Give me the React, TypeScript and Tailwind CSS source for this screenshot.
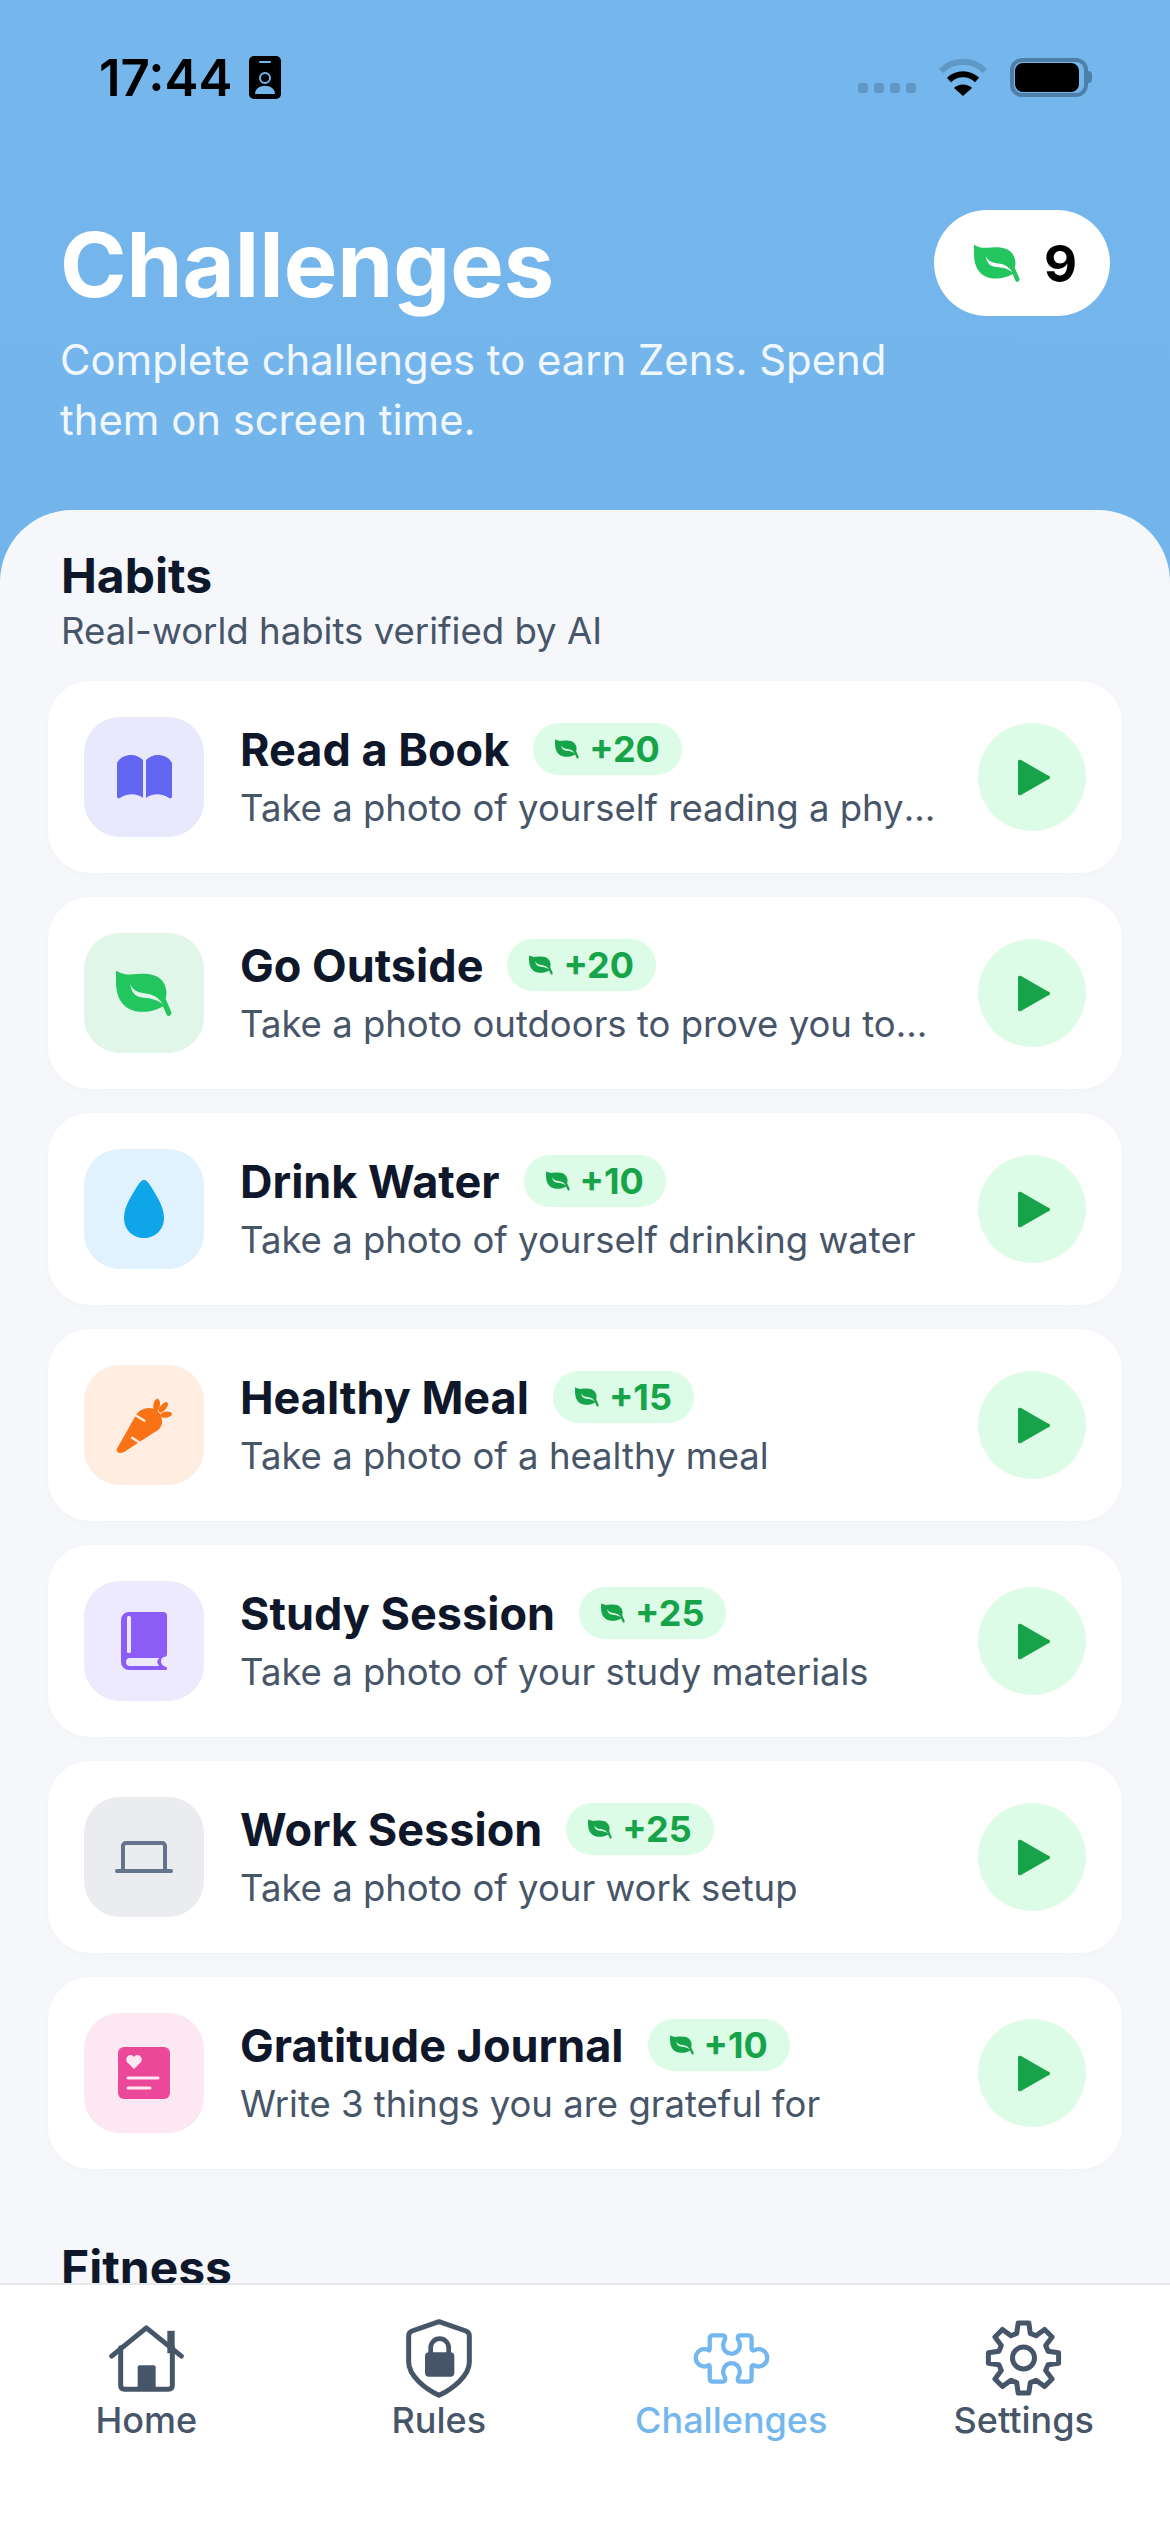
import type { ReactNode } from 'react';

const Leaf = ({ className }: { className: string }) => (
  <svg viewBox="0 0 148 124" className={className}>
    <path
      fill="currentColor"
      fillRule="evenodd"
      d="M3 3C10 6 22 14 45 11C75 8 105 8 122 28C133 42 136 60 131 76L146 110C149 118 139 126 134 118L124 96C100 112 60 116 34 102C8 88 0 60 0 30L0 6C0 2 2 1 3 3ZM38 37C44 55 60 60 78 62C98 64 112 72 124 90C108 78 92 74 72 73C52 72 40 60 38 37Z"
    />
  </svg>
);

const OpenBook = () => (
  <svg viewBox="0 0 55 44" className="h-[44px] w-[55px]">
    <path fill="#6366f1" d="M0 8C3 2 9 0 14 0C19 0 23 2 26 5V43C20 38 10 38 3 43C1 44 0 43 0 41Z" />
    <path fill="#6366f1" d="M55 8C52 2 46 0 41 0C36 0 32 2 29 5V43C35 38 45 38 52 43C54 44 55 43 55 41Z" />
  </svg>
);

const Drop = () => (
  <svg viewBox="0 0 40 58" className="h-[58px] w-[40px]">
    <path fill="#0ea5e9" d="M20 0C22 0 24 2 26 5C32 15 40 26 40 38C40 50 31 58 20 58C9 58 0 50 0 38C0 26 8 15 14 5C16 2 18 0 20 0Z" />
  </svg>
);

const Carrot = () => (
  <svg viewBox="0 0 168 165" className="h-[55px] w-[56px]">
    <g fill="#f97316">
      <path d="M4 150L58 55C66 38 84 30 100 30C125 32 140 50 138 75C136 90 125 98 112 105L30 158C15 170-4 165 4 150Z" />
      <ellipse cx="122" cy="22" rx="10" ry="20" transform="rotate(8 122 22)" />
      <ellipse cx="142" cy="28" rx="9" ry="19" transform="rotate(40 142 28)" />
      <ellipse cx="150" cy="50" rx="18" ry="9" transform="rotate(-6 150 50)" />
    </g>
    <path stroke="#ffede2" strokeWidth="7" d="M56 50l32 20M46 118l28 18" />
  </svg>
);

const StudyBook = () => (
  <svg viewBox="0 0 46 58" className="h-[58px] w-[46px]">
    <path fill="#8b5cf6" d="M8 0H42a4 4 0 0 1 4 4V42a3 3 0 0 1-3 3c-4 1-4 7 0 9l2 1a1.500 1.500 0 0 1-1 3H8a8 8 0 0 1-8-8V8a8 8 0 0 1 8-8z" />
    <rect x="6" y="4" width="4" height="37" rx="1.500" fill="#ede9fe" />
    <path fill="#ede9fe" d="M38 46H9a4 4 0 0 0 0 8H38l-2-4z" />
  </svg>
);

const LaptopIcon = () => (
  <svg viewBox="0 0 58 32" fill="none" stroke="#64748b" strokeWidth="4" strokeLinecap="round" className="h-[32px] w-[58px]">
    <path d="M8 29V5a3 3 0 0 1 3-3h36a3 3 0 0 1 3 3v24" />
    <path d="M2 30h54" />
  </svg>
);

const JournalIcon = () => (
  <svg viewBox="0 0 52 52" className="h-[52px] w-[52px]">
    <rect width="52" height="52" rx="6" fill="#ec4899" />
    <path fill="#fce7f3" d="M16 22l-7-7c-3-5 4-10 7-5 3-5 10 0 7 5z" />
    <path stroke="#fce7f3" strokeWidth="3" strokeLinecap="round" d="M10 31h30M10 41h22" />
  </svg>
);

const HomeIcon = () => (
  <svg viewBox="0 0 225 200" className="h-[67px] w-[75px]" fill="none" stroke="#475569" strokeWidth="15" strokeLinecap="round" strokeLinejoin="round">
    <path d="M8 93L112 8l105 85" />
    <path d="M186 28v45" strokeWidth="22" strokeLinecap="square" />
    <path d="M35 68v112q0 12 12 12h131q12 0 12-12V68" />
    <rect x="86" y="120" width="54" height="75" rx="6" fill="#475569" stroke="none" />
  </svg>
);

const ShieldIcon = () => (
  <svg viewBox="0 0 198 237" className="h-[79px] w-[66px]" fill="none" stroke="#475569" strokeWidth="15" strokeLinejoin="round">
    <path d="M99 8L180 36Q190 40 190 50V130C190 170 140 210 99 229C58 210 8 170 8 130V50Q8 40 18 36Z" />
    <path d="M74 104V86a27 27 0 0 1 54 0v18" strokeWidth="14" />
    <rect x="57" y="100" width="88" height="73" rx="12" fill="#475569" stroke="none" />
  </svg>
);

const PuzzleIcon = () => (
  <svg viewBox="0 0 230 152" className="h-[51px] w-[77px]" fill="none" stroke="#74b7ee" strokeWidth="13" strokeLinejoin="round">
    <path d="M60 7H88Q96 7 96 14V18C92 24 90 30 90 37A25 25 0 0 0 140 37C140 30 138 24 134 18V14Q134 7 142 7H165Q175 7 175 17V45Q175 52 182 52A26 26 0 1 1 182 96Q175 96 175 103V135Q175 145 165 145H142Q134 145 134 138V134C138 128 140 122 140 115A25 25 0 0 0 90 115C90 122 92 128 96 134V138Q96 145 88 145H60Q50 145 50 135V103Q50 96 48 96A26 26 0 1 1 48 52Q50 52 50 45V17Q50 7 60 7Z" />
  </svg>
);

// 8 teeth, points worked out from the angle of each one
const gearPath = Array.from({ length: 8 }, (_, k) => {
  const a = (k * Math.PI) / 4;
  const pt = (r: number, d: number) => `${(38.500 + r * Math.sin(a + d)).toFixed(2)} ${(38 - r * Math.cos(a + d)).toFixed(2)}`;
  return `${pt(25.500, -0.27)} L${pt(35.500, -0.15)} L${pt(35.500, 0.15)} L${pt(25.500, 0.27)}`;
}).join(' L');

const GearIcon = () => (
  <svg viewBox="0 0 77 76" className="h-[76px] w-[77px]" fill="none" stroke="#475569" strokeWidth="5" strokeLinejoin="round">
    <path d={`M${gearPath}Z`} />
    <circle cx="38.500" cy="38" r="11" />
  </svg>
);

const habits: { title: string; zens: number; desc: string; box: string; icon: ReactNode }[] = [
  { title: 'Read a Book', zens: 20, desc: 'Take a photo of yourself reading a physical book', box: 'bg-[#e8e9fc]', icon: <OpenBook /> },
  { title: 'Go Outside', zens: 20, desc: 'Take a photo outdoors to prove you touched grass', box: 'bg-[#e0f6e9]', icon: <Leaf className="h-[47px] w-[56px] text-[#22c55e]" /> },
  { title: 'Drink Water', zens: 10, desc: 'Take a photo of yourself drinking water', box: 'bg-[#dff2fd]', icon: <Drop /> },
  { title: 'Healthy Meal', zens: 15, desc: 'Take a photo of a healthy meal', box: 'bg-[#ffede2]', icon: <Carrot /> },
  { title: 'Study Session', zens: 25, desc: 'Take a photo of your study materials', box: 'bg-[#ede9fe]', icon: <StudyBook /> },
  { title: 'Work Session', zens: 25, desc: 'Take a photo of your work setup', box: 'bg-[#eaecf0]', icon: <LaptopIcon /> },
  { title: 'Gratitude Journal', zens: 10, desc: 'Write 3 things you are grateful for', box: 'bg-[#fce7f3]', icon: <JournalIcon /> },
];

const tabs = [
  { label: 'Home', icon: <HomeIcon />, active: false },
  { label: 'Rules', icon: <ShieldIcon />, active: false },
  { label: 'Challenges', icon: <PuzzleIcon />, active: true },
  { label: 'Settings', icon: <GearIcon />, active: false },
];

const StatusBar = () => (
  <div className="flex h-[154px] items-center justify-between pl-[99px] pr-[78px] text-black">
    <div className="flex items-center gap-[17px]">
      <span className="text-[51px] font-semibold leading-none">17:44</span>
      <svg viewBox="0 0 32 43" className="h-[43px] w-[32px]">
        <rect width="32" height="43" rx="5" fill="#000" />
        <rect x="10" y="5" width="12" height="2" rx="1" fill="#74b5ec" />
        <circle cx="16" cy="22" r="5" fill="none" stroke="#74b5ec" strokeWidth="2" />
        <path d="M6 38c0-11 20-11 20 0z" fill="#74b5ec" />
      </svg>
    </div>
    <div className="flex items-center gap-[22px]">
      <div className="mt-[22px] flex gap-[6px]">
        {[0, 1, 2, 3].map(i => (
          <span key={i} className="h-[10px] w-[10px] rounded-[3px] bg-[#5f97c6]" />
        ))}
      </div>
      <svg viewBox="0 0 50 38" className="h-[38px] w-[50px]" fill="none">
        <path d="M3 13a31 31 0 0 1 44 0" stroke="#5f97c6" strokeWidth="6" />
        <path d="M11 22a20 20 0 0 1 28 0" stroke="#000" strokeWidth="6" />
        <path d="M25 38l-9-8a13 13 0 0 1 18 0z" fill="#000" />
      </svg>
      <div className="flex items-center">
        <div className="h-[39px] w-[78px] rounded-[12px] border-[4px] border-[#4d7fa9] py-[1px] pl-[1px] pr-[5px]">
          <div className="h-full w-full rounded-[8px] bg-black" />
        </div>
        <span className="h-[12px] w-[4px] rounded-r-full bg-[#4d7fa9]" />
      </div>
    </div>
  </div>
);

const HabitCard = ({ title, zens, desc, box, icon }: (typeof habits)[number]) => (
  <div className="flex h-[192px] items-center rounded-[42px] bg-white px-[36px] shadow-[0_3px_12px_rgba(15,23,42,0.02)]">
    <div className={`flex h-[120px] w-[120px] shrink-0 items-center justify-center rounded-[36px] ${box}`}>{icon}</div>
    <div className="ml-[36px] min-w-0 flex-1">
      <div className="mt-[4px] flex h-[52px] items-center gap-[24px]">
        <span className="text-[45px] font-bold leading-none text-[#0f172a]">{title}</span>
        <span className="flex h-[52px] items-center gap-[10px] rounded-full bg-[#dcfce7] px-[22px]">
          <Leaf className="h-[20px] w-[24px] text-[#16a34a]" />
          <span className="text-[36px] font-bold leading-none text-[#16a34a]">+{zens}</span>
        </span>
      </div>
      <p className="mt-[6px] truncate pr-[40px] text-[36.500px] leading-[54px] text-[#475569]">{desc}</p>
    </div>
    <div className="flex h-[108px] w-[108px] shrink-0 items-center justify-center rounded-full bg-[#dcfce7]">
      <svg viewBox="0 0 32 37" className="ml-[4px] h-[37px] w-[32px]">
        <path d="M0 3a2 2 0 0 1 3-2l27 15.500a2 2 0 0 1 0 4L3 36a2 2 0 0 1-3-2z" fill="#16a34a" />
      </svg>
    </div>
  </div>
);

export default function App() {
  return (
    <div className="flex h-[2532px] w-[1170px] flex-col overflow-hidden bg-gradient-to-b from-[#75b6ed] to-[#6cade4] font-['Inter',sans-serif]">
      <header className="h-[510px] shrink-0">
        <StatusBar />
        <div className="flex items-start justify-between pl-[60px] pr-[60px] pt-[56px]">
          <div>
            <h1 className="text-[90px] font-bold leading-[110px] text-white">Challenges</h1>
            <p className="mt-[10px] w-[860px] text-[41.800px] leading-[60px] text-white/90">Complete challenges to earn Zens. Spend them on screen time.</p>
          </div>
          <div className="flex h-[106px] w-[176px] items-center gap-[24px] rounded-full bg-white pl-[40px]">
            <Leaf className="h-[39px] w-[46px] text-[#22c55e]" />
            <span className="text-[51px] font-bold leading-none text-black">9</span>
          </div>
        </div>
      </header>
      <main className="min-h-0 flex-1 overflow-hidden rounded-t-[72px] bg-[#f5f7fb] pt-[39px]">
        <section className="px-[48px]">
          <h2 className="pl-[13px] text-[48px] font-bold leading-[54px] text-[#0f172a]">Habits</h2>
          <p className="mb-[26px] mt-[4px] pl-[13px] text-[36.600px] leading-[48px] text-[#475569]">Real-world habits verified by AI</p>
          <div className="flex flex-col gap-[24px]">
            {habits.map(h => (
              <HabitCard key={h.title} {...h} />
            ))}
          </div>
        </section>
        <h2 className="mt-[72px] pl-[61px] text-[48px] font-bold leading-[54px] text-[#0f172a]">Fitness</h2>
      </main>
      <nav className="flex h-[249px] shrink-0 border-t-[2px] border-[#e5e7eb] bg-white pt-[32px]">
        {tabs.map(t => (
          <div key={t.label} className="flex flex-1 flex-col items-center">
            <div className="flex h-[82px] items-center justify-center">{t.icon}</div>
            <span className={`mt-[-3px] text-[36px] font-medium leading-[48px] ${t.active ? 'text-[#74b7ee]' : 'text-[#475569]'}`}>{t.label}</span>
          </div>
        ))}
      </nav>
    </div>
  );
}
